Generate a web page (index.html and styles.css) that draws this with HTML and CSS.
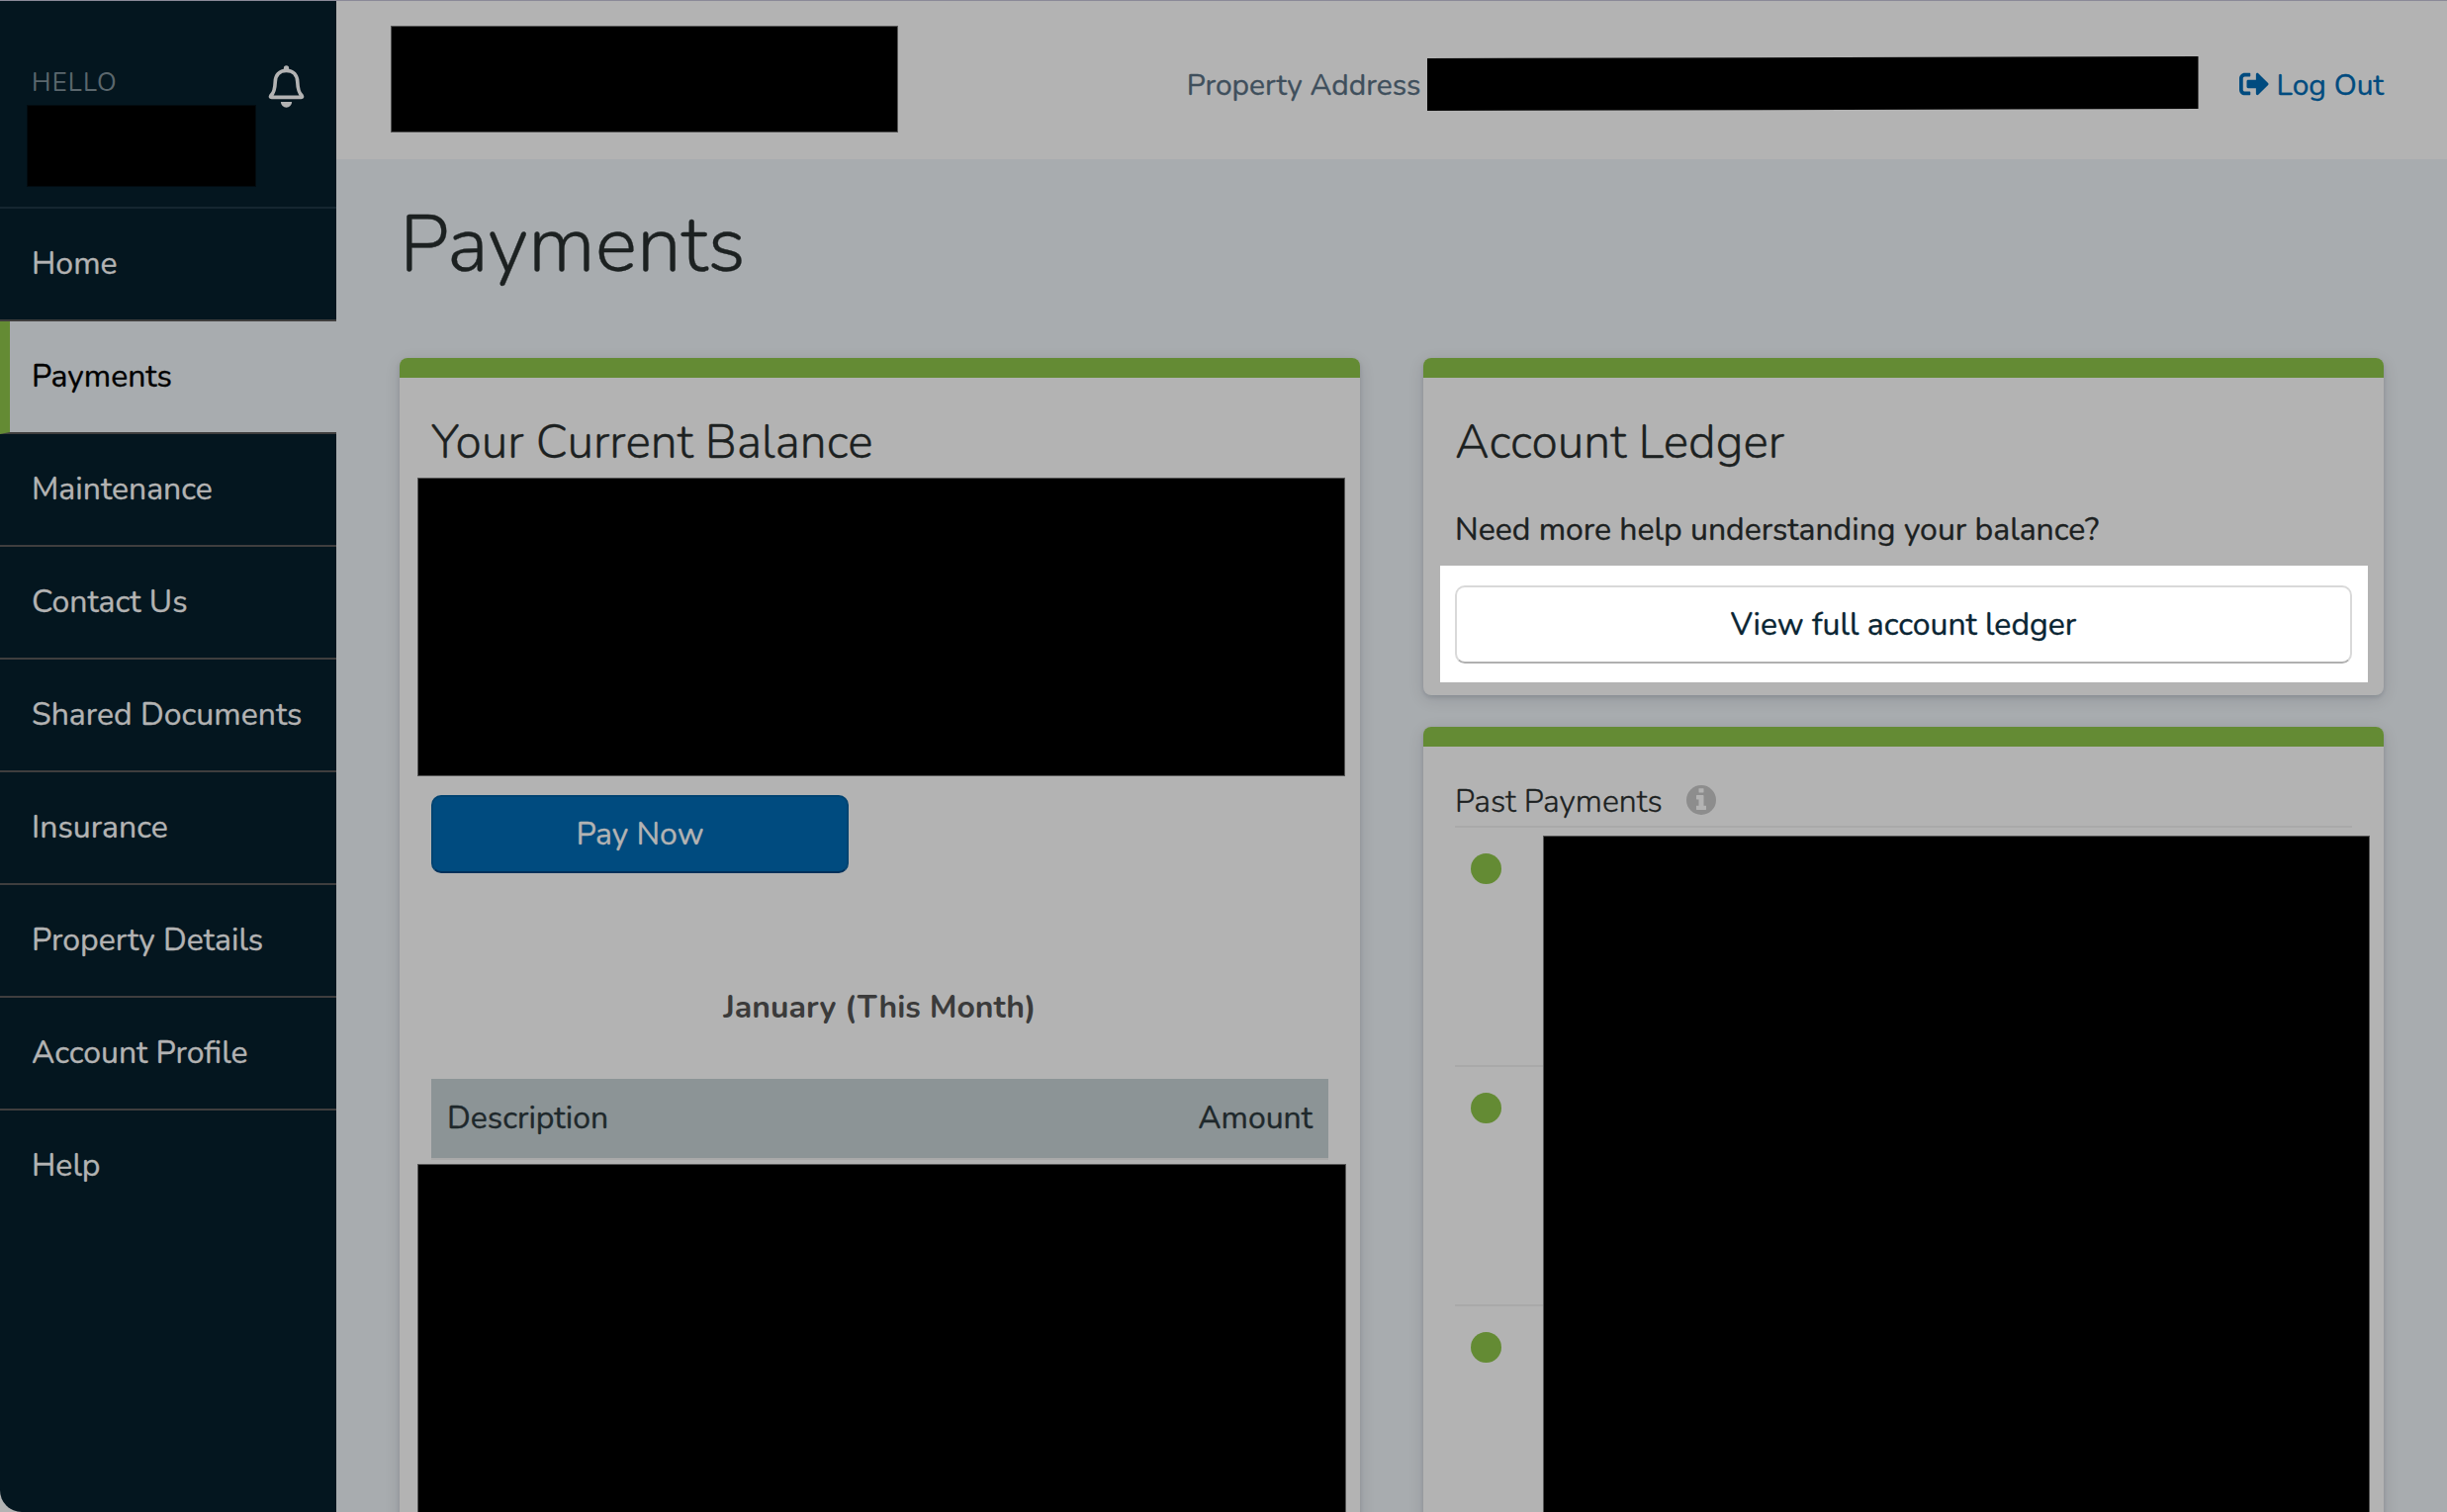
FILE: index.html
```html
<!DOCTYPE html>
<html lang="en">
<head>
<meta charset="utf-8">
<title>Payments</title>
<link rel="stylesheet" href="styles.css">
</head>
<body>
<div class="window">
  <aside class="sidebar">
    <div class="greeting">
      <div class="greeting-text">
        <span class="hello">HELLO</span>
        <div class="redacted redacted-name"></div>
      </div>
      <svg class="bell" viewBox="0 0 112 130" aria-hidden="true">
        <path d="M56 16C34 16 23 31 22 50c-1 23-5 36-13 42q-4 6 2 6h90q6 0 2-6c-8-6-12-19-13-42C89 31 78 16 56 16z" fill="none" stroke="#b3b3b3" stroke-width="11" stroke-linejoin="round"/>
        <path d="M48 18V9a8 8 0 0 1 16 0v9z" fill="#b3b3b3"/>
        <path d="M39 112h34a17 17 0 0 1-34 0z" fill="#b3b3b3"/>
      </svg>
    </div>
    <nav class="nav">
      <a class="nav-item">Home</a>
      <a class="nav-item active">Payments</a>
      <a class="nav-item">Maintenance</a>
      <a class="nav-item">Contact Us</a>
      <a class="nav-item">Shared Documents</a>
      <a class="nav-item">Insurance</a>
      <a class="nav-item">Property Details</a>
      <a class="nav-item">Account Profile</a>
      <a class="nav-item">Help</a>
    </nav>
  </aside>
  <div class="page">
    <header class="header">
      <div class="redacted redacted-logo"></div>
      <div class="header-right">
        <span class="address-label">Property Address</span>
        <div class="redacted-address"></div>
        <a class="logout">
          <svg class="logout-icon" viewBox="0 0 512 512" aria-hidden="true"><path fill="currentColor" d="M497 273L329 441c-15 15-41 4.500-41-17v-96H152c-13.300 0-24-10.700-24-24v-96c0-13.300 10.700-24 24-24h136V88c0-21.400 25.900-32 41-17l168 168c9.300 9.400 9.300 24.600 0 34zM192 436v-40c0-6.600-5.400-12-12-12H96c-17.700 0-32-14.300-32-32V160c0-17.700 14.300-32 32-32h84c6.600 0 12-5.400 12-12V76c0-6.600-5.400-12-12-12H96c-53 0-96 43-96 96v192c0 53 43 96 96 96h84c6.600 0 12-5.400 12-12z"/></svg>
          <span>Log Out</span>
        </a>
      </div>
    </header>
    <main class="main">
      <h1 class="title">Payments</h1>
      <div class="columns">
        <section class="card balance">
          <h2 class="card-title">Your Current Balance</h2>
          <div class="redacted redacted-balance"></div>
          <button class="btn btn-primary">Pay Now</button>
          <h3 class="month">January (This Month)</h3>
          <div class="table-head"><span>Description</span><span>Amount</span></div>
          <div class="redacted redacted-table"></div>
        </section>
        <div class="column">
          <section class="card ledger">
            <h2 class="card-title">Account Ledger</h2>
            <p class="help-text">Need more help understanding your balance?</p>
            <div class="highlight"><button class="btn btn-outline">View full account ledger</button></div>
          </section>
          <section class="card past">
            <div class="past-head">
              <span>Past Payments</span>
              <svg class="info" viewBox="0 128 1536 1536" aria-hidden="true"><circle cx="768" cy="896" r="768" fill="#8d8d8d"/><path fill="#b3b3b3" d="M1024 1376v-160q0-14-9-23t-23-9h-96v-512q0-14-9-23t-23-9h-320q-14 0-23 9t-9 23v160q0 14 9 23t23 9h96v320h-96q-14 0-23 9t-9 23v160q0 14 9 23t23 9h448q14 0 23-9t9-23zM896 480v-160q0-14-9-23t-23-9h-192q-14 0-23 9t-9 23v160q0 14 9 23t23 9h192q14 0 23-9t9-23z"/></svg>
            </div>
            <div class="payment"><span class="dot"></span></div>
            <div class="payment"><span class="dot"></span></div>
            <div class="payment"><span class="dot"></span></div>
            <div class="redacted redacted-past"></div>
          </section>
        </div>
      </div>
    </main>
  </div>
</div>
</body>
</html>
```
FILE: styles.css
```css
* { box-sizing: border-box; }

body {
  margin: 0;
  height: 1529px;
  overflow: hidden;
  background: #b3b3b3;
  font-family: "Nunito", "Lato", sans-serif;
  font-size: 32px;
  line-height: 44px;
  color: #1c2121;
  -webkit-text-stroke: .35px;
}

.window {
  display: flex;
  height: 1529px;
  border-top: 1px solid #8b8a98;
  border-bottom-left-radius: 22px;
  overflow: hidden;
  background: #a8acaf;
}

.redacted {
  background: #000;
  border: 1px solid #555;
}

/* Sidebar */
.sidebar {
  flex: none;
  width: 340px;
  background: #04161f;
  color: #b3b3b3;
}

.greeting {
  display: flex;
  height: 210px;
  padding: 65px 32px 0 27px;
  border-bottom: 2px solid #152630;
}

.greeting-text { width: 244px; }

.hello {
  display: block;
  height: 40px;
  padding-left: 5px;
  font-size: 25.6px;
  line-height: 36px;
  letter-spacing: 1.2px;
  color: #5b676d;
  -webkit-text-stroke: 0;
}

.redacted-name {
  width: 232px;
  height: 83px;
  border-color: #020b10;
}

.bell {
  width: 37px;
  height: 43px;
}

.nav-item {
  display: block;
  height: 114px;
  padding-left: 32px;
  line-height: 112px;
  border-bottom: 2px solid #3f3e3e;
}

.nav-item:last-child { border-bottom: 0; }

.nav-item.active {
  padding-left: 22px;
  border-left: 10px solid #648b34;
  background: #a8acaf;
  background-clip: padding-box;
  color: #000;
}

/* Header */
.page {
  flex: 1;
  min-width: 0;
}

.header {
  display: flex;
  justify-content: space-between;
  height: 160px;
  padding: 25px 64px 0 55px;
  background: #b3b3b3;
}

.redacted-logo {
  width: 513px;
  height: 108px;
}

.header-right {
  display: flex;
  height: 120px;
  font-size: 30px;
  line-height: 122px;
}

.address-label { color: #3f4f5c; }

.redacted-address {
  width: 780px;
  height: 56px;
  margin: 31px 41px 0 6px;
  background: #000;
  clip-path: polygon(0 2px, 100% 0, 100% 53px, 0 55px);
}

.logout {
  display: flex;
  gap: 8px;
  color: #004b7f;
}

.logout-icon {
  width: 30px;
  height: 30px;
  margin-top: 44px;
}

/* Content */
.main { padding: 32px 64px 0; }

.title {
  margin: 0 0 59px;
  font-size: 80px;
  font-weight: 300;
  line-height: 110px;
}

.columns {
  display: grid;
  grid-template-columns: repeat(2, minmax(0, 1fr));
  gap: 64px;
}

.column {
  display: flex;
  flex-direction: column;
  gap: 32px;
}

.card {
  height: 1260px;
  padding: 33px 32px 0;
  border-radius: 8px;
  background: #b3b3b3;
  box-shadow: 0 4px 16px rgba(10, 20, 35, .12), 0 2px 4px rgba(10, 20, 35, .12);
}

.card::before {
  content: "";
  display: block;
  height: 20px;
  margin: -33px -32px 33px;
  border-radius: 8px 8px 0 0;
  background: #648b34;
}

.card-title {
  margin: 0;
  font-size: 48px;
  font-weight: 300;
  line-height: 64px;
}

.btn {
  display: block;
  height: 79px;
  padding: 0;
  border: 2px solid;
  border-radius: 10px;
  font: inherit;
  text-align: center;
}

.redacted-balance {
  width: 938px;
  height: 302px;
  margin: 4px -17px 19px -14px;
}

.btn-primary {
  width: 422px;
  border-color: #004371 #004371 #00305a;
  background: #004b7f;
  color: #b3b3b3;
}

.month {
  margin: 114px 0 50px;
  font-size: 32px;
  font-weight: 700;
  text-align: center;
  color: #3b3b3b;
  -webkit-text-stroke: 0;
}

.table-head {
  display: flex;
  justify-content: space-between;
  height: 82px;
  padding: 0 16px;
  line-height: 80px;
  border-bottom: 2px solid #a9a9a9;
  background: #8c9496;
  background-clip: padding-box;
  color: #1e282b;
}

.redacted-table {
  width: 939px;
  height: 400px;
  margin: 4px -14px 0;
}

.ledger { height: 341px; }

.help-text { margin: 35px 0 14px; }

.highlight {
  height: 118px;
  margin: 0 -16px 0 -15px;
  padding: 20px 16px 0 15px;
  background: #fff;
}

.btn-outline {
  width: 100%;
  border-color: #d9d9d9 #d9d9d9 #b0b0b0;
  background: #fff;
  color: #0a2533;
}

.past { position: relative; }

.past-head {
  display: flex;
  gap: 24px;
  height: 49px;
  border-bottom: 2px solid #a9a9a9;
  font-weight: 300;
  line-height: 46px;
}

.info {
  width: 30px;
  height: 30px;
  margin-top: 6px;
}

.payment {
  height: 242px;
  padding: 26px 16px;
  border-bottom: 2px solid #a9a9a9;
}

.dot {
  display: block;
  width: 31px;
  height: 31px;
  border-radius: 50%;
  background: #648b34;
}

/* Covers the right-hand part of the payment rows */
.redacted-past {
  position: absolute;
  top: 110px;
  left: 121px;
  width: 836px;
  height: 900px;
}
```
